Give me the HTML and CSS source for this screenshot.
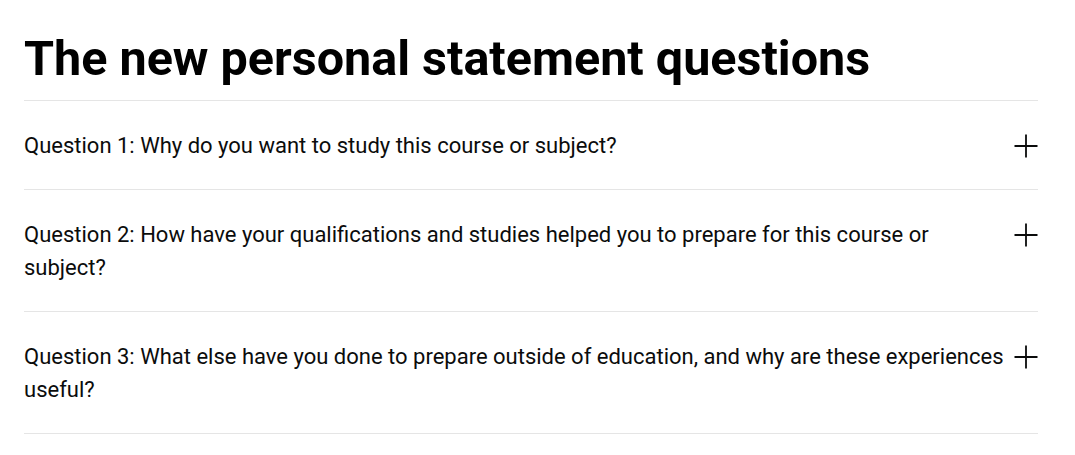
FILE: index.html
```
<!DOCTYPE html>
<html lang="en">
<head>
<meta charset="utf-8">
<link rel="stylesheet" href="styles.css">
</head>
<body>
<main class="wrap">
  <h2 class="title">The new personal statement questions</h2>
  <ul class="acc">
    <li class="item">
      <span class="q">Question 1: Why do you want to study this course or subject?</span>
      <svg class="plus" viewBox="0 0 24 24" aria-hidden="true"><path d="M12 0.5V23.5M0.5 12H23.5"/></svg>
    </li>
    <li class="item">
      <span class="q">Question 2: How have your qualifications and studies helped you to prepare for this course or subject?</span>
      <svg class="plus" viewBox="0 0 24 24" aria-hidden="true"><path d="M12 0.5V23.5M0.5 12H23.5"/></svg>
    </li>
    <li class="item">
      <span class="q">Question 3: What else have you done to prepare outside of education, and why are these experiences useful?</span>
      <svg class="plus" viewBox="0 0 24 24" aria-hidden="true"><path d="M12 0.5V23.5M0.5 12H23.5"/></svg>
    </li>
  </ul>
</main>
</body>
</html>
```
FILE: styles.css
```
html, body { margin: 0; padding: 0; background: #fff; }
body { font-family: Roboto, "Liberation Sans", Arial, sans-serif; color: #0b0c0c; }
.wrap { padding: 0 37px 0 24px; }
.title {
  margin: 0;
  padding-top: 30px;
  padding-bottom: 12px;
  font-size: 48.5px;
  line-height: 58px;
  font-weight: 700;
  color: #000;
}
.acc { list-style: none; margin: 0; padding: 0; border-top: 1px solid #e5e5e5; }
.item {
  display: flex;
  align-items: flex-start;
  gap: 10px;
  padding: 28px 0 27px;
  border-bottom: 1px solid #e5e5e5;
}
.q { flex: 1; font-size: 22px; line-height: 33px; color: #0b0c0c; }
.plus { flex: none; width: 24px; height: 24px; margin-top: 4.5px; stroke: #0b0c0c; stroke-width: 1.8; fill: none; }
```
